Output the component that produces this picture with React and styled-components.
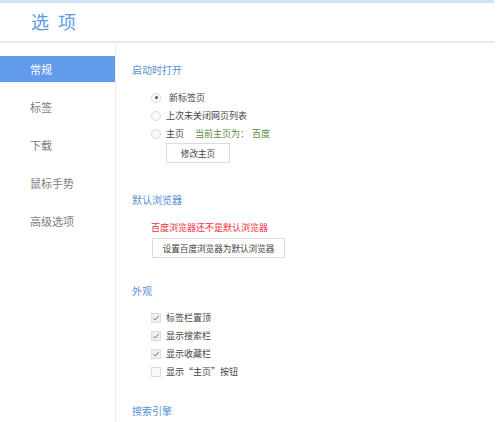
import React from "react";
import styled, { createGlobalStyle } from "styled-components";

const Global = createGlobalStyle`
  html, body { margin: 0; padding: 0; background: #fff; }
  body { font-family: "Noto Sans CJK SC", "Liberation Sans", sans-serif; }
`;
const Page = styled.div`
  width: 494px; height: 422px; overflow: hidden;
  display: flex; flex-direction: column; background: #fff;
  border-top: 3px solid #d3e3f6; box-sizing: border-box;
`;
const Header = styled.header`
  height: 38px; flex: none; border-bottom: 2px solid #e9e9e9; box-sizing: content-box;
  display: flex; align-items: center; padding-left: 31px;
`;
const Title = styled.h1`
  margin: 0 0 2px; font-size: 18px; font-weight: 400; line-height: 20px;
  color: #5b9be6; word-spacing: 5px;
`;
const Body = styled.div`flex: 1; display: flex; min-height: 0;`;
const Sidebar = styled.nav`
  width: 115px; flex: none; border-right: 1px solid #ececec; padding-top: 13px;
  display: flex; flex-direction: column; gap: 12px;
`;
const NavItem = styled.div`
  height: 26px; line-height: 26px; padding-left: 30px; font-size: 11px;
  color: ${p => (p.$active ? "#fff" : "#808080")};
  background: ${p => (p.$active ? "#629bea" : "transparent")};
`;
const Content = styled.main`flex: 1; padding: 21px 0 0 16px;`;
const Section = styled.section`margin-bottom: ${p => p.$mb}px;`;
const SectionTitle = styled.h2`
  margin: 0; font-size: 10px; height: 14px; line-height: 12px; font-weight: 400; color: #5b93d3;
`;
const Group = styled.div`
  padding: ${p => p.$pt}px 0 0 19px; display: flex; flex-direction: column; gap: 5px;
`;
const Row = styled.label`
  display: flex; align-items: center; height: 13px; font-size: 9px; color: #444;
`;
const Radio = styled.span`
  width: 10px; height: 10px; flex: none; margin-right: ${p => p.$gap}px; border-radius: 50%;
  border: 1px solid #dcdcdc; background: #fafafa; box-sizing: border-box;
  display: flex; align-items: center; justify-content: center;
  &::after {
    content: ""; width: 3px; height: 3px; border-radius: 50%;
    background: ${p => (p.$on ? "#555" : "transparent")};
  }
`;
const Check = styled.span`
  width: 10px; height: 10px; flex: none; margin-right: 5px;
  border: 1px solid #dedede; background: ${p => (p.$on ? "#f0f0f0" : "#fafafa")};
  box-sizing: border-box; display: flex; align-items: center; justify-content: center;
  svg { display: ${p => (p.$on ? "block" : "none")}; }
`;
const Current = styled.span`color: #5a8a3c; margin-left: 11px; white-space: pre; word-spacing: 1px;`;
const Button = styled.button`
  display: block; box-sizing: border-box; height: 20px; padding: 0;
  width: ${p => p.$w}px; margin: ${p => p.$m}; background: #fff;
  border: 1px solid #dcdcdc; font: 8.6px "Noto Sans CJK SC", "Liberation Sans", sans-serif; color: #444;
`;
const Warning = styled.div`
  font-size: 9px; line-height: 13px; color: #f0303a; margin: 13px 0 4px 19px;
`;

const Tick = () => (
  <svg width="8" height="8" viewBox="0 0 8 8">
    <path d="M1.3 4.2 3.2 6 6.8 1.8" fill="none" stroke="#777" strokeWidth="1" />
  </svg>
);

export default function App() {
  return (
    <Page>
      <Global />
      <Header><Title>选 项</Title></Header>
      <Body>
        <Sidebar>
          <NavItem $active>常规</NavItem>
          <NavItem>标签</NavItem>
          <NavItem>下载</NavItem>
          <NavItem>鼠标手势</NavItem>
          <NavItem>高级选项</NavItem>
        </Sidebar>
        <Content>
          <Section $mb={31}>
            <SectionTitle>启动时打开</SectionTitle>
            <Group $pt={13}>
              <Row><Radio $on $gap={8} />新标签页</Row>
              <Row><Radio $gap={5} />上次未关闭网页列表</Row>
              <Row><Radio $gap={5} />主页<Current>当前主页为： 百度</Current></Row>
            </Group>
            <Button $w={64} $m="3px 0 0 34px">修改主页</Button>
          </Section>
          <Section $mb={27}>
            <SectionTitle>默认浏览器</SectionTitle>
            <Warning>百度浏览器还不是默认浏览器</Warning>
            <Button $w={133} $m="0 0 0 20px">设置百度浏览器为默认浏览器</Button>
          </Section>
          <Section $mb={27}>
            <SectionTitle>外观</SectionTitle>
            <Group $pt={12}>
              <Row><Check $on><Tick /></Check>标签栏置顶</Row>
              <Row><Check $on><Tick /></Check>显示搜索栏</Row>
              <Row><Check $on><Tick /></Check>显示收藏栏</Row>
              <Row><Check />显示“主页”按钮</Row>
            </Group>
          </Section>
          <Section $mb={0}>
            <SectionTitle>搜索引擎</SectionTitle>
          </Section>
        </Content>
      </Body>
    </Page>
  );
}
